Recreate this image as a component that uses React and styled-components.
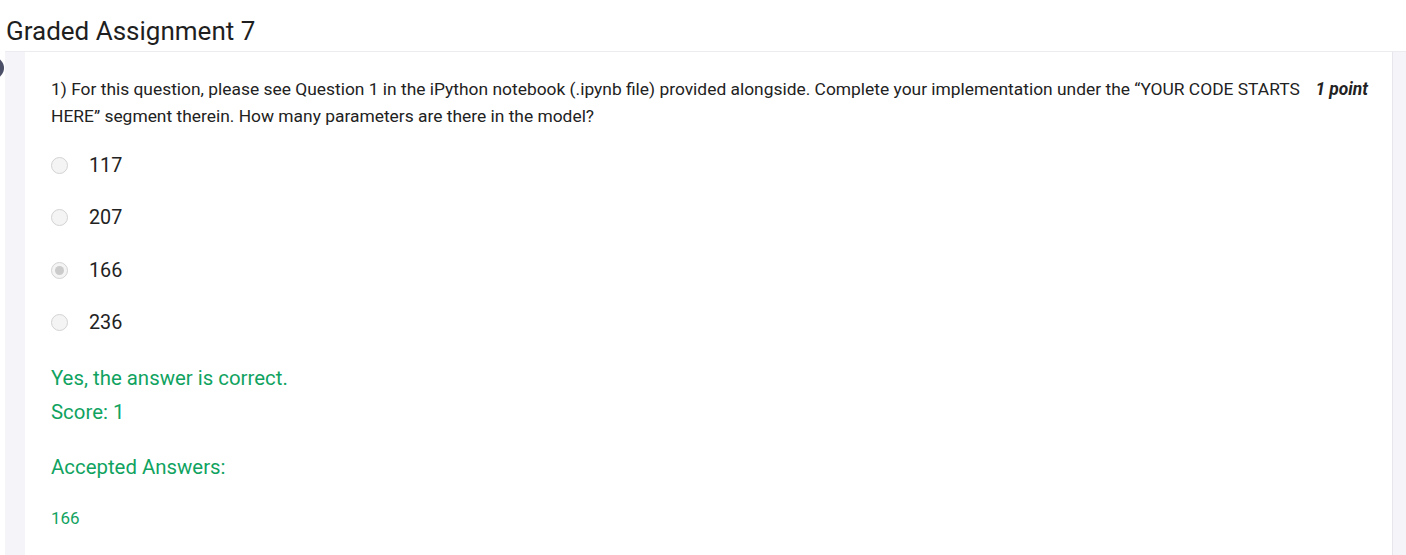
import React from "react";
import styled, { createGlobalStyle } from "styled-components";

const Global = createGlobalStyle`
  body {
    margin: 0;
    background: #fff;
    font-family: Roboto, "Liberation Sans", sans-serif;
    color: #212121;
  }
`;

const Title = styled.h1`
  margin: 0;
  padding-left: 6px;
  height: 51px;
  line-height: 62px;
  font-size: 26px;
  font-weight: 400;
  color: #1f1f1f;
`;

const Shell = styled.div`
  position: relative;
  margin-left: 5px;
  height: 504px;
  display: flex;
  background: #f5f5f9;
  border-top: 1px solid #ececf0;
  padding: 0 13px 0 20px;
  box-sizing: border-box;
`;

const Toggle = styled.span`
  position: absolute;
  left: -23px;
  top: 5px;
  width: 22px;
  height: 22px;
  border-radius: 50%;
  background: #4b5068;
`;

const Card = styled.div`
  flex: 1;
  background: #fff;
  border-right: 1px solid #e6e6ec;
  padding: 24px 24px 0 26px;
`;

const Question = styled.div`
  display: flex;
  gap: 6px;
  font-size: 17.4px;
  line-height: 27px;
  color: #222;
`;

const QText = styled.div`
  flex: 1;
`;

const Points = styled.div`
  font-weight: 700;
  font-style: italic;
  white-space: nowrap;
`;

const Options = styled.div`
  margin-top: 9px;
`;

const Option = styled.label`
  height: 52.5px;
  display: flex;
  align-items: center;
  gap: 21px;
  font-size: 19.8px;
  color: #222;
`;

const Radio = styled.span`
  width: 15px;
  height: 15px;
  border-radius: 50%;
  border: 1px solid #d3d3d3;
  background: #f4f4f4;
  display: flex;
  align-items: center;
  justify-content: center;
  &::after {
    content: "";
    width: 9px;
    height: 9px;
    border-radius: 50%;
    background: ${(p) => (p.$checked ? "#cbcbcb" : "transparent")};
  }
`;

const Feedback = styled.div`
  color: #10a35f;
  font-size: 20.4px;
  line-height: 34px;
  margin-top: ${(p) => p.$gap || 0}px;
`;

const Answer = styled.div`
  color: #10a35f;
  font-size: 17px;
  line-height: 24px;
  margin-top: 22px;
`;

const options = ["117", "207", "166", "236"];

export default function App() {
  return (
    <>
      <Global />
      <Title>Graded Assignment 7</Title>
      <Shell>
        <Toggle />
        <Card>
          <Question>
            <QText>
              1) For this question, please see Question 1 in the iPython notebook (.ipynb file) provided alongside. Complete your implementation under the “YOUR CODE STARTS HERE” segment therein. How many parameters are there in the model?
            </QText>
            <Points>1 point</Points>
          </Question>
          <Options>
            {options.map((o) => (
              <Option key={o}>
                <Radio $checked={o === "166"} />
                {o}
              </Option>
            ))}
          </Options>
          <Feedback $gap={12}>Yes, the answer is correct.</Feedback>
          <Feedback>Score: 1</Feedback>
          <Feedback $gap={21}>Accepted Answers:</Feedback>
          <Answer>166</Answer>
        </Card>
      </Shell>
    </>
  );
}
